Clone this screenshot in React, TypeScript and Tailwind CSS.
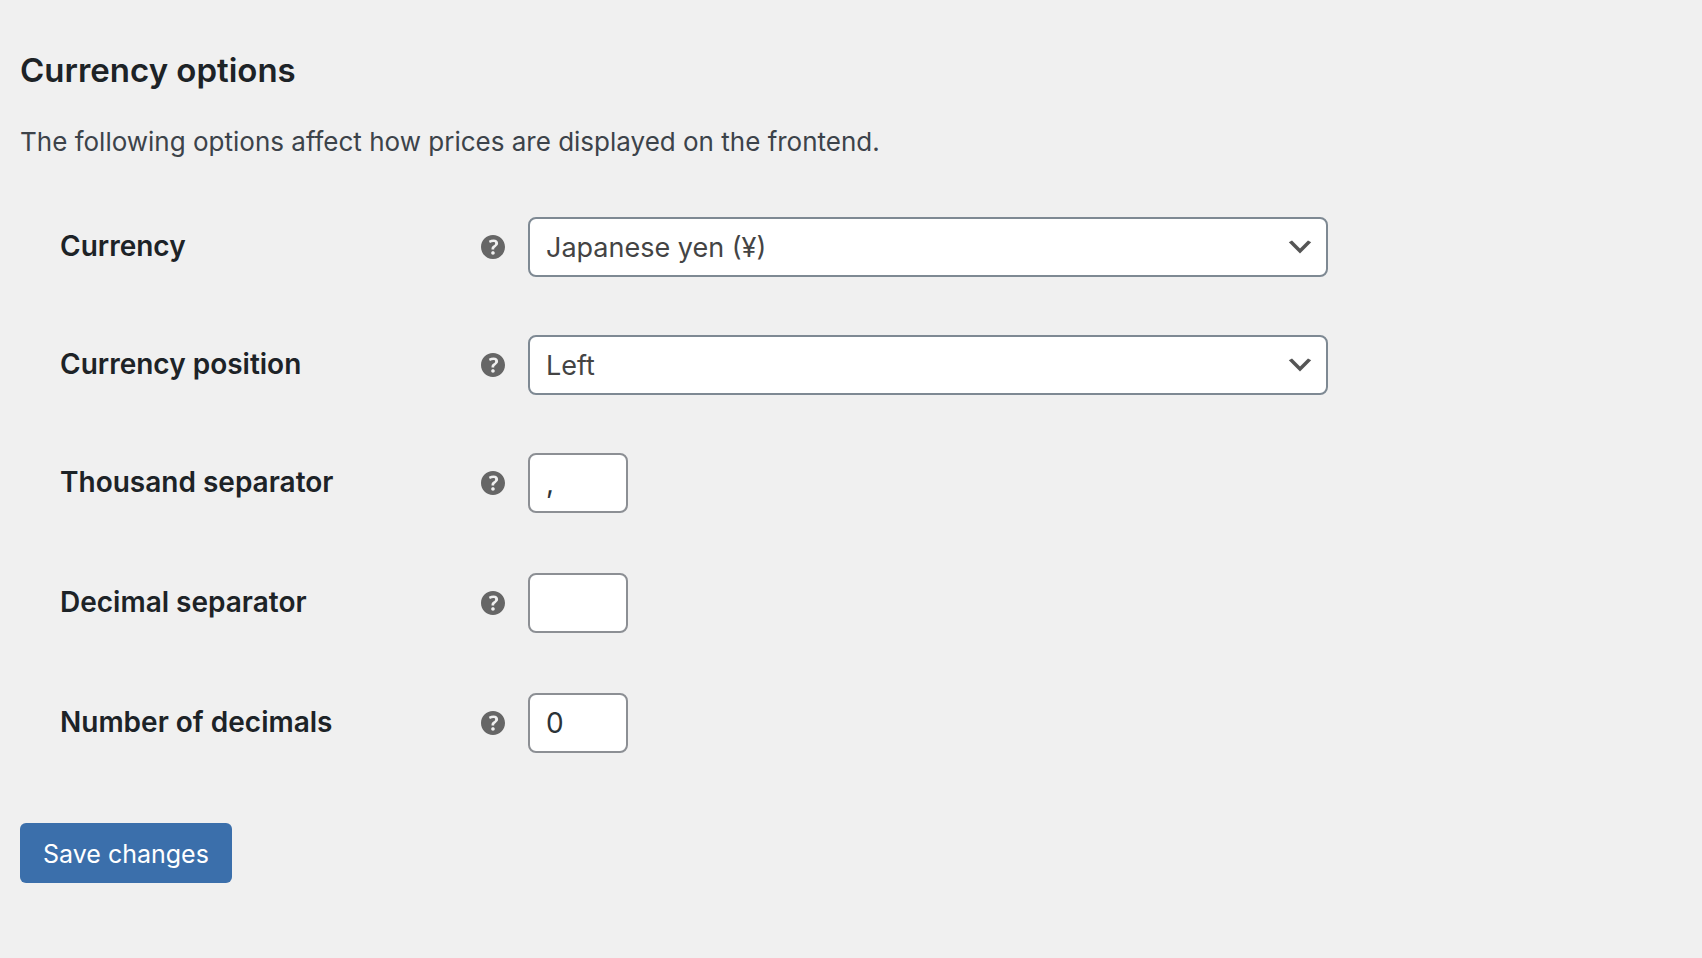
import { useState } from "react";
import type { ReactNode } from "react";

const HelpTip = ({ text }: { text: string }) => (
  <button type="button" aria-label={text} className="mr-[23px] size-6 shrink-0 text-[#666]">
    <svg viewBox="3 3 14 14" className="size-6" fill="currentColor">
      <path d="M17 10c0-3.87-3.14-7-7-7-3.87 0-7 3.13-7 7s3.13 7 7 7c3.86 0 7-3.13 7-7zm-6.3 1.48H9.14v-.43c0-.38.08-.7.24-.98s.46-.57.88-.89c.41-.29.68-.53.81-.71.14-.18.2-.39.2-.62 0-.25-.09-.44-.28-.58-.19-.13-.45-.19-.79-.19-.58 0-1.25.19-2 .57l-.64-1.28c.87-.49 1.8-.74 2.77-.74.81 0 1.45.2 1.92.58.48.39.71.91.71 1.55 0 .43-.09.8-.29 1.11-.19.32-.57.67-1.11 1.06-.38.28-.61.49-.71.63-.1.15-.15.34-.15.57v.35zm-1.47 2.74c-.18-.17-.27-.42-.27-.73 0-.33.08-.58.26-.75s.43-.25.77-.25c.32 0 .57.09.75.26s.27.42.27.74c0 .3-.09.55-.27.72-.18.18-.43.27-.75.27-.33 0-.58-.09-.76-.26z" />
    </svg>
  </button>
);

const Field = ({
  id,
  label,
  help,
  children,
}: {
  id: string;
  label: string;
  help: string;
  children: ReactNode;
}) => (
  <div className="flex items-center">
    <label
      htmlFor={id}
      className="w-[421px] shrink-0 pb-0.5 text-[28px] leading-9 font-semibold text-[#1d2327]"
    >
      {label}
    </label>
    <HelpTip text={help} />
    {children}
  </div>
);

const SelectInput = ({
  id,
  value,
  onChange,
  options,
}: {
  id: string;
  value: string;
  onChange: (value: string) => void;
  options: string[];
}) => (
  <div className="relative w-full max-w-[800px]">
    <select
      id={id}
      value={value}
      onChange={(e) => onChange(e.target.value)}
      className="block h-15 w-full appearance-none rounded-lg border-2 border-[#7e8993] bg-white pt-0.5 pr-12 pl-4 text-[27px] leading-9 text-[#444]"
    >
      {options.map((option) => (
        <option key={option}>{option}</option>
      ))}
    </select>
    <svg
      viewBox="0 0 20 20"
      className="pointer-events-none absolute inset-y-0 right-3 my-auto size-8"
      fill="#555"
    >
      <path d="M5 6l5 5 5-5 2 1-7 7-7-7 2-1z" />
    </svg>
  </div>
);

const TextInput = ({
  id,
  value,
  onChange,
}: {
  id: string;
  value: string;
  onChange: (value: string) => void;
}) => (
  <input
    id={id}
    type="text"
    value={value}
    onChange={(e) => onChange(e.target.value)}
    className="h-15 w-[100px] rounded-lg border-2 border-[#8c8f94] bg-white px-4 text-[28px] leading-9 text-[#2c3338]"
  />
);

export default function App() {
  const [currency, setCurrency] = useState("Japanese yen (¥)");
  const [position, setPosition] = useState("Left");
  const [thousandSep, setThousandSep] = useState(",");
  const [decimalSep, setDecimalSep] = useState("");
  const [decimals, setDecimals] = useState("0");

  return (
    <main className="min-h-screen bg-[#f0f0f0] px-5 pt-12 pb-16 font-['Inter',sans-serif]">
      <form onSubmit={(e) => e.preventDefault()}>
        <h2 className="text-[33px] leading-11 font-semibold text-[#1d2327]">Currency options</h2>
        <p className="mt-8 text-[26px] leading-9 text-[#3c434a]">
          The following options affect how prices are displayed on the frontend.
        </p>

        <div className="mt-[57px] flex flex-col gap-[60px] pl-10">
          <div className="flex flex-col gap-[58px]">
            <Field id="currency" label="Currency" help="Help for currency">
              <SelectInput
                id="currency"
                value={currency}
                onChange={setCurrency}
                options={["Japanese yen (¥)", "Euro (€)", "Pound sterling (£)", "United States (US) dollar ($)"]}
              />
            </Field>
            <Field id="position" label="Currency position" help="Help for currency position">
              <SelectInput
                id="position"
                value={position}
                onChange={setPosition}
                options={["Left", "Right", "Left with space", "Right with space"]}
              />
            </Field>
            <Field id="thousand-sep" label="Thousand separator" help="Help for thousand separator">
              <TextInput id="thousand-sep" value={thousandSep} onChange={setThousandSep} />
            </Field>
          </div>
          <Field id="decimal-sep" label="Decimal separator" help="Help for decimal separator">
            <TextInput id="decimal-sep" value={decimalSep} onChange={setDecimalSep} />
          </Field>
          <Field id="decimals" label="Number of decimals" help="Help for number of decimals">
            <TextInput id="decimals" value={decimals} onChange={setDecimals} />
          </Field>
        </div>

        <button
          type="submit"
          className="mt-[70px] h-15 rounded-md bg-[#3b6fab] px-[23px] pt-0.5 text-[25px] leading-9 text-white"
        >
          Save changes
        </button>
      </form>
    </main>
  );
}
